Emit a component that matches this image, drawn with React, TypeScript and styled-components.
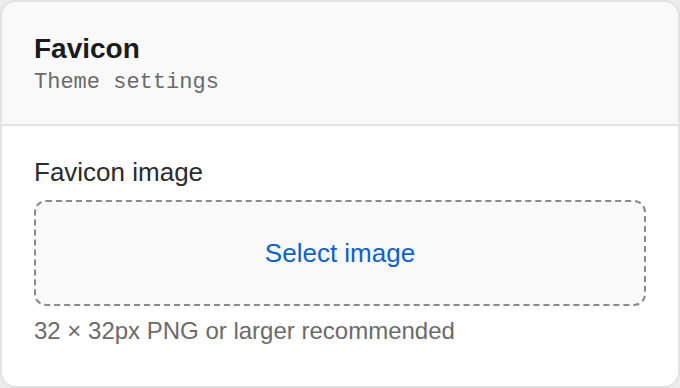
import React from "react";
import styled, { createGlobalStyle } from "styled-components";

const Global = createGlobalStyle`
  html, body { margin: 0; padding: 0; background: #ececec; }
  body { font-family: "Liberation Sans", Arial, sans-serif; }
  * { box-sizing: border-box; }
`;

const Card = styled.section`
  width: 680px;
  height: 388px;
  background: #ffffff;
  border: 2px solid #e2e2e2;
  border-radius: 16px;
  overflow: hidden;
  display: flex;
  flex-direction: column;
`;

const Header = styled.header`
  background: #f9f9f9;
  border-bottom: 2px solid #e4e4e4;
  padding: 31px 32px 0;
  height: 124px;
  flex-shrink: 0;
`;

const Title = styled.h1`
  margin: 0;
  font-size: 28px;
  font-weight: 700;
  color: #1a1a1a;
  line-height: 32px;
`;

const Subtitle = styled.p`
  margin: 5px 0 0;
  font-family: "Liberation Mono", "Courier New", monospace;
  font-size: 22px;
  color: #6b6b6b;
  line-height: 26px;
`;

const Body = styled.div`
  padding: 31px 32px 0;
  display: flex;
  flex-direction: column;
`;

const Label = styled.label`
  font-size: 26px;
  color: #2b2b2b;
  line-height: 30px;
`;

const Drop = styled.button`
  margin-top: 13px;
  height: 106px;
  width: 100%;
  background: #f9f9f9;
  border: 2px dashed #8a8a8a;
  border-radius: 12px;
  font-family: "Liberation Sans", Arial, sans-serif;
  font-size: 26px;
  color: #0a62d0;
  cursor: pointer;
  padding: 0;
`;

const Hint = styled.p`
  margin: 11px 0 0;
  font-size: 24px;
  color: #6b6b6b;
  line-height: 28px;
`;

export default function App() {
  return (
    <>
      <Global />
      <Card>
        <Header>
          <Title>Favicon</Title>
          <Subtitle>Theme settings</Subtitle>
        </Header>
        <Body>
          <Label>Favicon image</Label>
          <Drop type="button">Select image</Drop>
          <Hint>32 × 32px PNG or larger recommended</Hint>
        </Body>
      </Card>
    </>
  );
}
